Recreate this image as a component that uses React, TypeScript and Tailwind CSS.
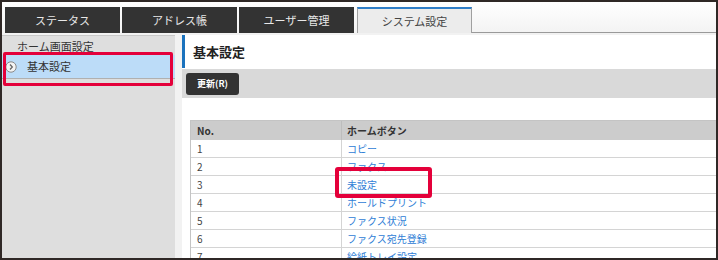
import React from "react";

const font = { fontFamily: '"Noto Sans CJK JP", "Noto Sans", sans-serif' };

const rows = [
  ["1", "コピー"],
  ["2", "ファクス"],
  ["3", "未設定"],
  ["4", "ホールドプリント"],
  ["5", "ファクス状況"],
  ["6", "ファクス宛先登録"],
  ["7", "給紙トレイ設定"],
];

export default function App() {
  return (
    <div
      className="relative w-[718px] h-[260px] overflow-hidden border-2 border-[#2f2826] bg-[#fafafa] text-[#333]"
      style={font}
    >
      {/* tab bar */}
      <div className="flex h-[31px] pt-[5px] pl-[3px] bg-gradient-to-b from-[#ffffff] to-[#f3f3f3]">
        {["ステータス", "アドレス帳", "ユーザー管理"].map((t) => (
          <div
            key={t}
            className="w-[115px] mr-[2px] h-[26px] bg-[#333333] text-[#e8e8e8] text-[11px] flex items-center justify-center"
          >
            {t}
          </div>
        ))}
        <div className="ml-[1px] w-[115px] h-[26px] bg-[#ececec] border-t-2 border-t-[#2f7ec8] border-x border-x-[#a0a0a0] text-[11px] text-[#444] flex items-center justify-center">
          システム設定
        </div>
        <div className="flex-1 self-end h-[1px] bg-[#9a9a9a]" />
      </div>

      {/* body */}
      <div className="flex h-[225px] bg-[#f2f2f2] pt-[2px]">
        {/* sidebar */}
        <div className="w-[173px] shrink-0 bg-[#dedede] border-t border-[#c8c8c8]">
          <div className="h-[18px] pl-[15px] pt-[2px] text-[11px] text-[#333] leading-[16px]">
            ホーム画面設定
          </div>
          <div className="mt-[1px] h-[24px] bg-[#bcdcf8] border-b border-[#b0b0b0] flex items-center text-[11px]">
            <svg width="12" height="12" viewBox="0 0 12 12" className="ml-[3px] mr-[10px] shrink-0">
              <circle cx="6" cy="6" r="5.2" fill="#f4f4f4" stroke="#888" strokeWidth="1" />
              <path d="M5 3.5 L7.3 6 L5 8.5" fill="none" stroke="#666" strokeWidth="1.3" />
            </svg>
            基本設定
          </div>
        </div>

        {/* main */}
        <div className="ml-[7px] flex-1 bg-white flex flex-col overflow-hidden">
          <div className="h-[33px] shrink-0 flex items-stretch bg-white">
            <div className="w-[3px] bg-[#1a72bd]" />
            <div className="pl-[8px] flex items-center text-[13px] font-bold text-[#222]">
              基本設定
            </div>
          </div>
          <div className="mt-[1px] h-[29px] shrink-0 bg-[#d9d9d9] flex items-center pl-[4px]">
            <div className="w-[53px] h-[22px] rounded-[3px] bg-[#333333] text-white text-[9px] font-bold flex items-center justify-center">
              更新(R)
            </div>
          </div>
          <div className="pt-[22px] pl-[8px] shrink-0">
            <div className="w-[530px] border-t border-l border-[#c4c4c4] text-[10px]">
              <div className="flex h-[19px] bg-[#cccccc] font-bold text-[#333] items-center">
                <div className="w-[151px] pl-[6px] border-r border-[#bdbdbd] h-full flex items-center">No.</div>
                <div className="pl-[5px]">ホームボタン</div>
              </div>
              {rows.map(([n, label]) => (
                <div key={n} className="flex h-[18px] border-b border-[#d4d4d4] items-center">
                  <div className="w-[151px] pl-[6px] border-r border-[#d4d4d4] h-full flex items-center text-[#444]">
                    {n}
                  </div>
                  <div className="pl-[5px] text-[#2f80d6]">{label}</div>
                </div>
              ))}
            </div>
          </div>
        </div>
      </div>

      {/* red highlight overlays */}
      <div className="absolute left-[1px] top-[50px] w-[170px] h-[34px] border-[3px] border-[#e4003a] rounded-[2px]" />
      <div className="absolute left-[333px] top-[165px] w-[97px] h-[31px] border-[4px] border-[#e4003a] rounded-[3px]" />
    </div>
  );
}
